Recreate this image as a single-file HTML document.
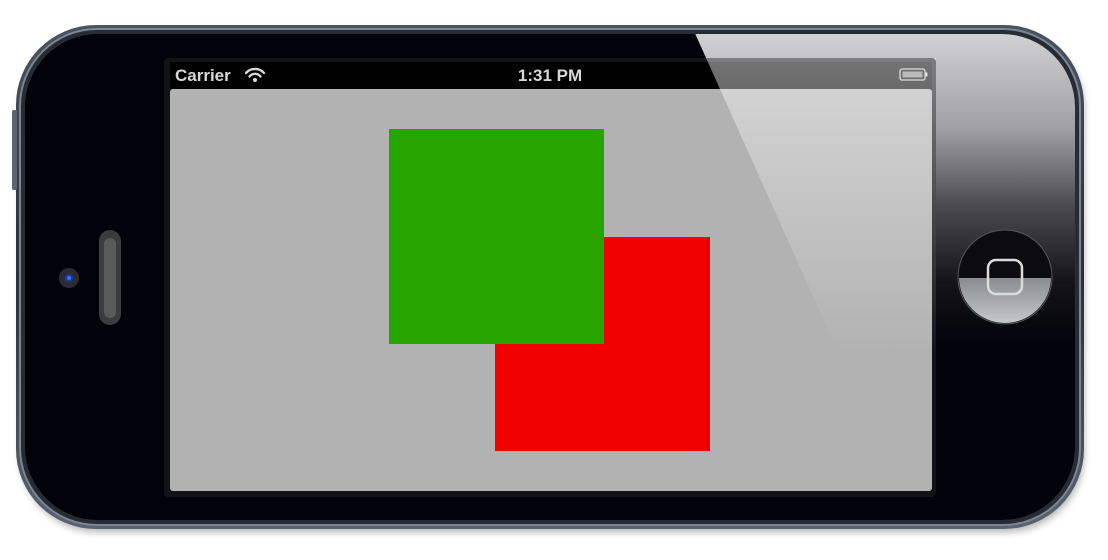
<!DOCTYPE html>
<html><head><meta charset="utf-8"><style>
html,body{margin:0;padding:0;background:#fff;width:1108px;height:560px;overflow:hidden}
svg{display:block}
</style></head><body>
<svg width="1108" height="560" viewBox="0 0 1108 560" xmlns="http://www.w3.org/2000/svg">
<defs>
<filter id="sh" x="-5%" y="-5%" width="110%" height="120%"><feGaussianBlur stdDeviation="4"/></filter>
<linearGradient id="rim" x1="0" y1="0" x2="0" y2="1">
<stop offset="0" stop-color="#4a5460"/><stop offset="0.5" stop-color="#2a3038"/><stop offset="1" stop-color="#5a6470"/></linearGradient>
<linearGradient id="glare" gradientUnits="userSpaceOnUse" x1="0" y1="36" x2="0" y2="345">
<stop offset="0" stop-color="#d0d0d2"/><stop offset="0.3" stop-color="#a0a0a4"/><stop offset="0.55" stop-color="#4a4a50"/><stop offset="0.8" stop-color="#141418"/><stop offset="1" stop-color="#02030a"/></linearGradient>
<linearGradient id="glare2" x1="0" y1="0" x2="0" y2="1">
<stop offset="0" stop-color="#fff" stop-opacity="0.45"/><stop offset="0.1" stop-color="#fff" stop-opacity="0.42"/><stop offset="1" stop-color="#fff" stop-opacity="0"/></linearGradient>
<linearGradient id="hb" x1="0" y1="0" x2="0" y2="1">
<stop offset="0" stop-color="#4a4d52"/><stop offset="1" stop-color="#c4c8cc"/></linearGradient>
<clipPath id="gc"><polygon points="689,20 1100,20 1100,352 838,352"/></clipPath>
<clipPath id="lower"><rect x="950" y="278" width="110" height="60"/></clipPath>
</defs>
<rect x="20" y="32" width="1064" height="500" rx="78" fill="#000" opacity="0.3" filter="url(#sh)"/>
<rect x="16" y="25" width="1068" height="504" rx="80" fill="url(#rim)"/>
<rect x="19" y="28" width="1062" height="498" rx="78" fill="#7a8694"/>
<rect x="21" y="30" width="1058" height="494" rx="76" fill="#262b34"/>
<rect x="25" y="34" width="1050" height="486" rx="73" fill="#02030a"/>
<g clip-path="url(#gc)"><rect x="25" y="34" width="1050" height="486" rx="73" fill="url(#glare)"/></g>
<rect x="12" y="110" width="5" height="80" rx="2" fill="#5a6470"/>
<circle cx="69" cy="278" r="10" fill="#2a2c32"/><circle cx="69" cy="278" r="4" fill="#1a3aa0"/><circle cx="69" cy="278" r="2" fill="#3a70ff"/>
<rect x="99" y="230" width="22" height="95" rx="11" fill="#3a3c40"/>
<rect x="104" y="238" width="12" height="80" rx="6" fill="#5a5a5c"/>
<rect x="164" y="58" width="772" height="439" rx="4" fill="#121318"/>
<rect x="170" y="62" width="762" height="27" fill="#000"/>
<rect x="170" y="89" width="762" height="402" rx="3" fill="#b2b2b2"/>
<rect x="495" y="237" width="215" height="214" fill="#f00000"/>
<rect x="389" y="129" width="215" height="215" fill="#26a500"/>
<text x="175" y="81" font-family="Liberation Sans, sans-serif" font-size="17" font-weight="bold" fill="#d8d8d8">Carrier</text>
<g fill="none" stroke="#d8d8d8" stroke-width="2.3" stroke-linecap="round">
<path d="M246 73 A12 12 0 0 1 264 73"/><path d="M249.5 76.5 A7 7 0 0 1 260.5 76.5"/></g>
<circle cx="255" cy="80" r="2" fill="#d8d8d8"/>
<text x="550" y="81" text-anchor="middle" font-family="Liberation Sans, sans-serif" font-size="17" font-weight="bold" fill="#d8d8d8">1:31 PM</text>
<g clip-path="url(#gc)"><rect x="164" y="58" width="772" height="294" fill="url(#glare2)"/></g>
<rect x="900" y="69" width="25" height="11" rx="2" fill="none" stroke="#ddd" stroke-width="1.3"/>
<rect x="902.5" y="71.5" width="20" height="6" fill="#bbb"/>
<rect x="925.5" y="72.5" width="2" height="4" fill="#ddd"/>
<circle cx="1005" cy="277" r="47" fill="#0c0c10" stroke="#55585e" stroke-width="1"/>
<g clip-path="url(#lower)"><circle cx="1005" cy="277" r="46" fill="url(#hb)"/></g>
<rect x="988" y="260" width="34" height="34" rx="8" fill="none" stroke="#dcdcdc" stroke-width="2.5"/>
</svg>
</body></html>
